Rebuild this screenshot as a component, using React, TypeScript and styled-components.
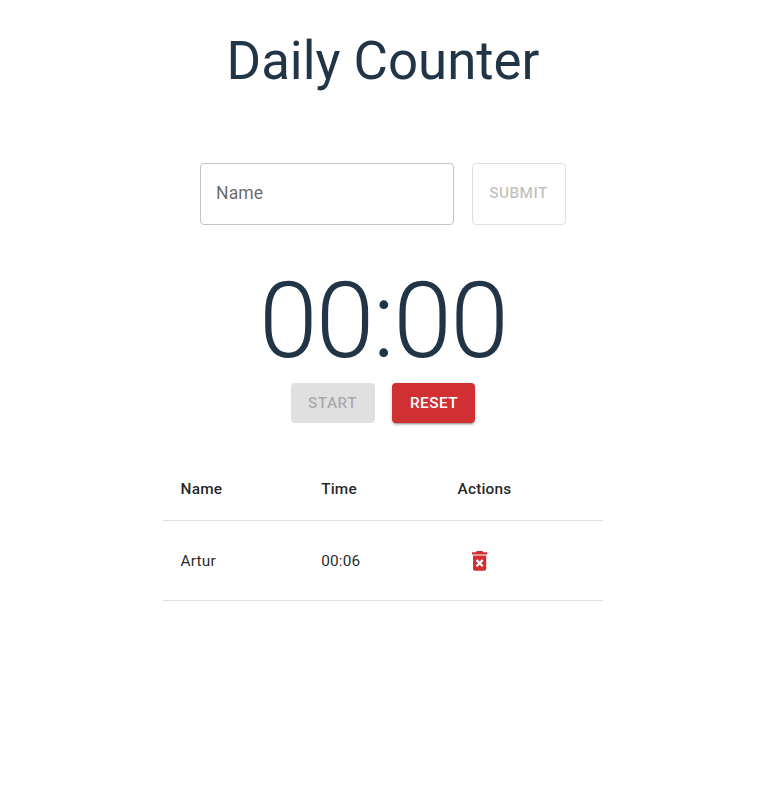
import React from "react";
import styled, { createGlobalStyle, css } from "styled-components";

const Global = createGlobalStyle`
  body { margin: 0; background: #fff; font-family: Roboto, sans-serif; color: rgba(0, 0, 0, 0.87); }
  *, *::before, *::after { box-sizing: border-box; }
`;

const Page = styled.main`
  display: flex;
  flex-direction: column;
  align-items: center;
  width: 766px;
`;

const Title = styled.h1`
  margin: 29px 0 0;
  height: 64px;
  font-size: 52.8px;
  line-height: 65px;
  font-weight: 400;
  color: #213547;
`;

const Form = styled.form`
  display: flex;
  gap: 18px;
  margin-top: 70px;
`;

const NameInput = styled.input`
  width: 254px;
  height: 62px;
  padding: 0 15px 2px;
  border: 1px solid #c4c4c4;
  border-radius: 4px;
  background: transparent;
  font: 400 17.6px Roboto, sans-serif;
  letter-spacing: 0.1px;
  outline: 0;
  &::placeholder { color: rgba(0, 0, 0, 0.6); opacity: 1; }
`;

type Kind = "outlined" | "disabled" | "error";

const kinds = {
  outlined: css`
    width: 94px;
    height: 62px;
    padding: 0 1px 2px 0;
    border: 1px solid rgba(0, 0, 0, 0.12);
    background: transparent;
    color: rgba(0, 0, 0, 0.26);
  `,
  disabled: css`
    width: 84px;
    height: 40px;
    padding: 0 1px 0 0;
    border: 0;
    background: rgba(0, 0, 0, 0.12);
    color: rgba(0, 0, 0, 0.26);
  `,
  error: css`
    width: 83px;
    height: 40px;
    padding: 0 0 0 1px;
    border: 0;
    background: #d13033;
    color: #fff;
    box-shadow: 0 3px 1px -2px rgba(0, 0, 0, 0.2), 0 2px 2px 0 rgba(0, 0, 0, 0.14),
      0 1px 5px 0 rgba(0, 0, 0, 0.12);
  `,
};

const Button = styled.button<{ $kind: Kind }>`
  border-radius: 4px;
  font: 500 15.4px Roboto, sans-serif;
  letter-spacing: 0.44px;
  text-transform: uppercase;
  ${({ $kind }) => kinds[$kind]}
`;

const Clock = styled.div`
  margin-top: 32px;
  height: 126px;
  font-size: 105.6px;
  line-height: 128px;
  font-weight: 300;
  letter-spacing: -1.65px;
  color: #213547;
`;

const Controls = styled.div`
  display: flex;
  gap: 17px;
`;

const Table = styled.table`
  width: 440px;
  margin-top: 34px;
  border-collapse: collapse;
  table-layout: fixed;
  font-size: 15.4px;
  letter-spacing: 0.165px;
  text-align: left;
`;

const Column = styled.col<{ $width: number }>`
  width: ${({ $width }) => $width}px;
`;

const Row = styled.tr<{ $height: number }>`
  height: ${({ $height }) => $height}px;
  border-bottom: 1px solid #e0e0e0;
`;

const HeadCell = styled.th`
  padding: 1px 17.6px 0;
  font-weight: 500;
`;

const Cell = styled.td`
  padding: 2px 17.6px 0;
`;

const IconButton = styled.button`
  display: flex;
  padding: 9px 8.8px;
  border: 0;
  background: none;
  color: #d13033;
`;

const DeleteIcon = () => (
  <svg width="26.4" height="26.4" viewBox="-0.4 0.2 24 24" fill="currentColor" aria-hidden="true">
    <path d="M6 19c0 1.100.9 2 2 2h8c1.100 0 2-.9 2-2V7H6v12zm2.460-7.120 1.410-1.410L12 12.590l2.120-2.120 1.410 1.410L13.410 14l2.120 2.120-1.410 1.410L12 15.410l-2.120 2.120-1.410-1.410L10.590 14l-2.130-2.120zM15.500 4l-1-1h-5l-1 1H5v2h14V4z" />
  </svg>
);

const entries = [{ name: "Artur", time: "00:06" }];

export default function App() {
  return (
    <Page>
      <Global />
      <Title>Daily Counter</Title>
      <Form>
        <NameInput placeholder="Name" aria-label="Name" />
        <Button type="submit" $kind="outlined" disabled>Submit</Button>
      </Form>
      <Clock>00:00</Clock>
      <Controls>
        <Button type="button" $kind="disabled" disabled>Start</Button>
        <Button type="button" $kind="error">Reset</Button>
      </Controls>
      <Table>
        <colgroup>
          <Column $width={140.6} />
          <Column $width={136.4} />
          <Column $width={163} />
        </colgroup>
        <thead>
          <Row $height={63}>
            <HeadCell>Name</HeadCell>
            <HeadCell>Time</HeadCell>
            <HeadCell>Actions</HeadCell>
          </Row>
        </thead>
        <tbody>
          {entries.map((entry) => (
            <Row key={entry.name} $height={80}>
              <Cell>{entry.name}</Cell>
              <Cell>{entry.time}</Cell>
              <Cell>
                <IconButton type="button" aria-label="Delete">
                  <DeleteIcon />
                </IconButton>
              </Cell>
            </Row>
          ))}
        </tbody>
      </Table>
    </Page>
  );
}
